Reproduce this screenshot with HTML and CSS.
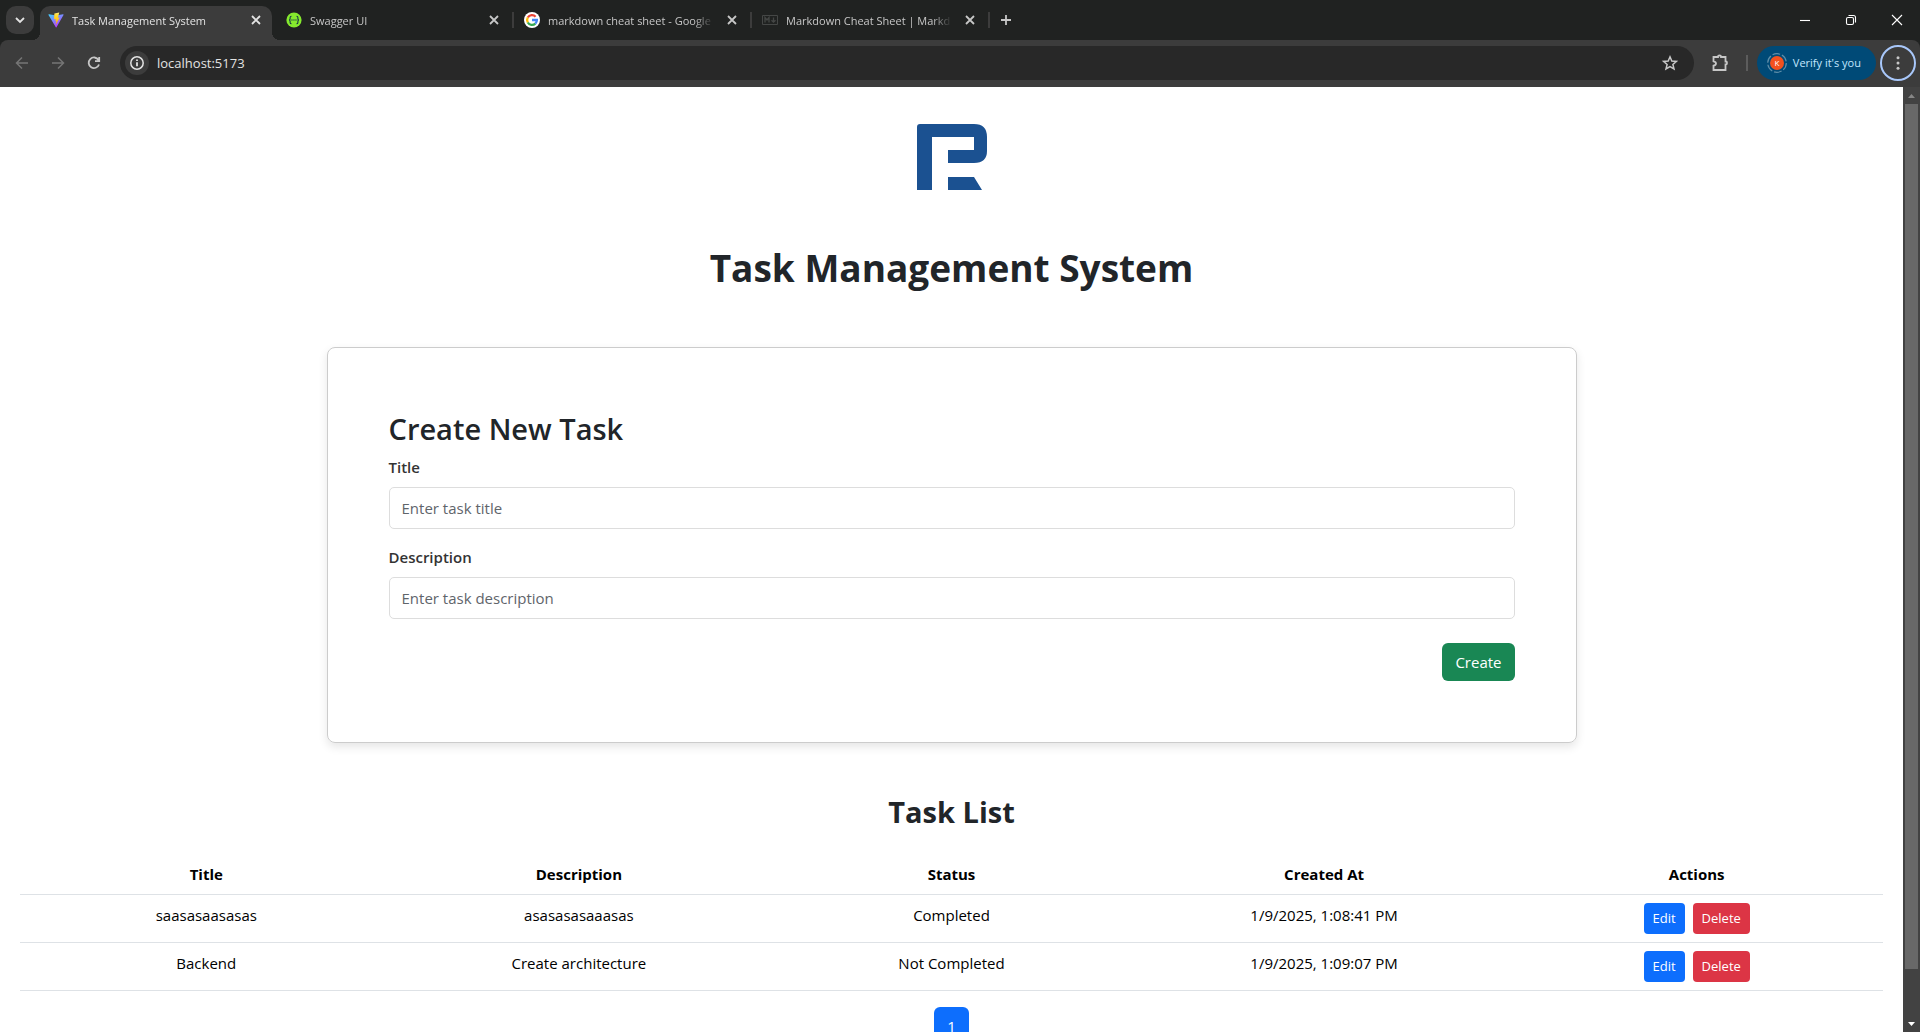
FILE: index.html
```html
<!DOCTYPE html>
<html lang="en">
<head>
<meta charset="utf-8">
<meta name="viewport" content="width=device-width, initial-scale=1">
<title>Task Management System</title>
<link rel="stylesheet" href="styles.css">
</head>
<body>
<div class="browser">
  <header class="chrome">
    <div class="tabstrip">
      <button class="tab-search" aria-label="Search tabs"><svg width="12" height="12" viewBox="0 0 12 12"><path d="M2 4l4 4 4-4" class="line-bold"/></svg></button>
      <div class="tabs">
        <div class="tab tab-active">
          <svg class="favicon" viewBox="0 0 32 32"><defs><linearGradient id="vite" x1="0" y1="0" x2="0.6" y2="1"><stop offset="0" stop-color="#41d1ff"/><stop offset="1" stop-color="#bd34fe"/></linearGradient><linearGradient id="bolt" x1="0" y1="0" x2="0" y2="1"><stop offset="0" stop-color="#ffea83"/><stop offset="0.2" stop-color="#ffdd35"/><stop offset="1" stop-color="#ffa800"/></linearGradient></defs><path d="M31 6L17 30.500q-.7 1-1.400 0L1 6q-.5-1.500 1-1.300l14 2.500 14-2.500q1.500-.2 1 1.300z" fill="url(#vite)"/><path d="M22.500 1L12.800 3l-.7 11q0 .5.500.5l3-.7-.8 4.500 1.800-.5-1.200 7q0 .8.500.3L23.500 11l-3.600.6z" fill="url(#bolt)"/></svg>
          <span class="tab-title">Task Management System</span>
          <button class="tab-close" aria-label="Close tab"><svg width="10" height="10" viewBox="0 0 10 10"><path d="M1 1l8 8M9 1l-8 8" class="line-bold"/></svg></button>
        </div>
        <div class="tab">
          <svg class="favicon" viewBox="0 0 16 16"><circle cx="8" cy="8" r="7.600" fill="#85ea2d"/><path d="M5.500 4.200q-1.400 0-1.400 1.300v1.200Q4.100 8 3 8q1.100 0 1.100 1.300v1.200q0 1.300 1.400 1.300M10.500 4.200q1.400 0 1.400 1.300v1.200Q11.900 8 13 8q-1.100 0-1.100 1.300v1.200q0 1.300-1.400 1.300" fill="none" stroke="#173647" stroke-width="1.100"/><path d="M5.300 8h5.400" stroke="#173647" stroke-width="1.200" stroke-dasharray="1.300 .7"/></svg>
          <span class="tab-title">Swagger UI</span>
          <button class="tab-close" aria-label="Close tab"><svg width="10" height="10" viewBox="0 0 10 10"><path d="M1 1l8 8M9 1l-8 8" class="line-bold"/></svg></button>
        </div>
        <div class="tab tab-divided">
          <svg class="favicon" viewBox="0 0 16 16"><circle cx="8" cy="8" r="8" fill="#fff"/><g fill="none" stroke-width="2.300"><path d="M11.600 4.700A4.900 4.900 0 0 0 3.800 5.500" stroke="#ea4335"/><path d="M3.800 5.500a4.900 4.900 0 0 0 0 5" stroke="#fbbc05"/><path d="M3.800 10.500a4.900 4.900 0 0 0 7.500 1.100" stroke="#34a853"/><path d="M11.300 11.600A4.900 4.900 0 0 0 12.900 8H8" stroke="#4285f4"/></g></svg>
          <span class="tab-title">markdown cheat sheet - Google</span>
          <button class="tab-close" aria-label="Close tab"><svg width="10" height="10" viewBox="0 0 10 10"><path d="M1 1l8 8M9 1l-8 8" class="line-bold"/></svg></button>
        </div>
        <div class="tab tab-divided tab-last">
          <svg class="favicon" viewBox="0 0 16 16" fill="none" stroke="#454746"><path d="M.5 3.500h15v9H.5z"/><path d="M3 10.500v-5l2 2.500 2-2.500v5M11.500 5.500v4.500M9.500 8.200l2 2 2-2" stroke-width="1.300"/></svg>
          <span class="tab-title">Markdown Cheat Sheet | Markd</span>
          <button class="tab-close" aria-label="Close tab"><svg width="10" height="10" viewBox="0 0 10 10"><path d="M1 1l8 8M9 1l-8 8" class="line-bold"/></svg></button>
        </div>
      </div>
      <button class="new-tab" aria-label="New tab"><svg width="12" height="12" viewBox="0 0 12 12"><path d="M6 1v10M1 6h10" class="line-bold"/></svg></button>
      <div class="window-controls">
        <button aria-label="Minimize"><svg width="12" height="12" viewBox="0 0 12 12"><path d="M1 6.500h10" class="line-thin"/></svg></button>
        <button aria-label="Restore"><svg width="12" height="12" viewBox="0 0 12 12"><rect x="1.500" y="3.500" width="7" height="7" rx="1.500" class="line-thin"/><path d="M3.500 1.500h5a2 2 0 0 1 2 2v5" class="line-thin"/></svg></button>
        <button aria-label="Close"><svg width="12" height="12" viewBox="0 0 12 12"><path d="M1 1l10 10M11 1L1 11" class="line-thin"/></svg></button>
      </div>
    </div>
    <div class="toolbar">
      <div class="nav">
        <button class="nav-off" aria-label="Back"><svg width="16" height="16" viewBox="0 0 16 16"><path d="M14 8H3M8 2.500L2.500 8 8 13.500" class="line"/></svg></button>
        <button class="nav-off" aria-label="Forward"><svg width="16" height="16" viewBox="0 0 16 16"><path d="M2 8h11M8 2.500L13.500 8 8 13.500" class="line"/></svg></button>
        <button aria-label="Reload"><svg width="16" height="16" viewBox="0 0 16 16"><path d="M13 9.500A5.300 5.300 0 1 1 12.500 5M13.200 2v4.200H9" class="line-bold"/></svg></button>
      </div>
      <div class="omnibox">
        <button class="site-info" aria-label="View site information"><svg width="16" height="16" viewBox="0 0 16 16"><circle cx="8" cy="8" r="6.200" class="line"/><path d="M8 7.200v4M8 4.500v1.600" class="line-bold"/></svg></button>
        <input class="url" type="text" aria-label="Address" value="localhost:5173">
        <button class="star" aria-label="Bookmark this tab"><svg width="18" height="18" viewBox="0 0 18 18"><path d="M9 2.800l1.800 4.200 4.600.4-3.500 3 1.100 4.500L9 12.500l-4 2.400 1.100-4.500-3.500-3 4.600-.4z" class="line"/></svg></button>
      </div>
      <button class="extensions" aria-label="Extensions"><svg width="18" height="18" viewBox="0 0 18 18"><path d="M2.500 3h4.500v-.5a1.500 1 0 0 1 3 0V3h4.500v4.500h.5a1 1.500 0 0 1 0 3h-.5v5.500h-12v-4.300q2.500-.5 2.500-2.200t-2.500-2.200z" class="line-bold"/></svg></button>
      <span class="toolbar-divider"></span>
      <button class="profile"><svg width="20" height="20" viewBox="0 0 20 20"><circle cx="10" cy="10" r="9.300" fill="none" stroke="#5f8ea8" stroke-width="1.200" stroke-dasharray="7.740 2"/><circle cx="10" cy="10" r="7" fill="#f4511e"/><text x="10" y="13" text-anchor="middle" class="initial">K</text></svg><span>Verify it's you</span></button>
      <button class="menu" aria-label="Menu"><svg width="16" height="16" viewBox="0 0 16 16" fill="#c7c7c7"><circle cx="8" cy="2.700" r="1.500"/><circle cx="8" cy="8" r="1.500"/><circle cx="8" cy="13.300" r="1.500"/></svg></button>
    </div>
  </header>
  <div class="viewport">
    <main class="page">
      <svg class="logo" viewBox="0 0 70 66" role="img" aria-label="Logo"><path d="M3 0h54q13 0 13 13v14q0 12-13 12H31V26h26V13H15v53H0V3q0-3 3-3zM31 53h26l8 13H31z" fill="#1b5191"/></svg>
      <h1>Task Management System</h1>
      <form class="card">
        <h2>Create New Task</h2>
        <div class="field">
          <label for="title">Title</label>
          <input id="title" type="text" placeholder="Enter task title">
        </div>
        <div class="field">
          <label for="description">Description</label>
          <input id="description" type="text" placeholder="Enter task description">
        </div>
        <div class="form-actions"><button type="button" class="btn btn-success">Create</button></div>
      </form>
      <section class="tasks">
        <h2>Task List</h2>
        <table>
          <thead><tr><th>Title</th><th>Description</th><th>Status</th><th>Created At</th><th>Actions</th></tr></thead>
          <tbody>
            <tr><td>saasasaasasas</td><td>asasasasaaasas</td><td>Completed</td><td>1/9/2025, 1:08:41 PM</td><td><div class="row-actions"><button class="btn btn-small btn-primary">Edit</button><button class="btn btn-small btn-danger">Delete</button></div></td></tr>
            <tr><td>Backend</td><td>Create architecture</td><td>Not Completed</td><td>1/9/2025, 1:09:07 PM</td><td><div class="row-actions"><button class="btn btn-small btn-primary">Edit</button><button class="btn btn-small btn-danger">Delete</button></div></td></tr>
          </tbody>
        </table>
        <nav class="pagination"><button class="btn btn-primary">1</button></nav>
      </section>
    </main>
    <div class="scrollbar" aria-hidden="true">
      <svg width="17" height="17" viewBox="0 0 17 17"><path d="M5 11l3.500-4 3.500 4z" fill="#868686"/></svg>
      <div class="track"><div class="thumb"></div></div>
      <svg width="17" height="17" viewBox="0 0 17 17"><path d="M5 7l3.500 4L12 7z" fill="#fff"/></svg>
    </div>
  </div>
</div>
</body>
</html>
```
FILE: styles.css
```css
* { box-sizing: border-box; }
body {
  margin: 0;
  font-family: "Open Sans", "Noto Sans", sans-serif;
  font-size: 15px;
  line-height: 24px;
  color: #212529;
  background: #fff;
}
button, input { font: inherit; color: inherit; margin: 0; }
button { border: 0; padding: 0; background: none; }
svg { display: block; flex: none; }
h1, h2 { margin: 0; }

.browser { display: flex; flex-direction: column; height: 100vh; overflow: hidden; }

.line, .line-bold, .line-thin { fill: none; stroke: currentColor; }
.line { stroke-width: 1.500; }
.line-bold { stroke-width: 1.800; }
.line-thin { stroke-width: 1.100; }

/* Browser frame */
.chrome { flex: none; background: #202221; color: #c7c7c7; font-size: 11px; line-height: 16px; }
.tabstrip { display: flex; height: 40px; padding: 6px 0 0 6px; }
.tab-search {
  display: grid; place-items: center;
  width: 28px; height: 28px; border-radius: 10px;
  background: #3c3c3c; color: #e3e3e3;
}
.tabs { display: flex; margin-left: 6px; }
.tab {
  position: relative;
  display: flex; align-items: center; gap: 8px;
  width: 238px; padding: 0 16px 6px 8px;
}
.tab-active { background: #3c3c3c; color: #e3e3e3; width: 232px; border-radius: 10px 10px 0 0; padding-right: 10px; margin-right: 6px; }
.tab-active::before, .tab-active::after {
  content: ""; position: absolute; bottom: 0; width: 8px; height: 8px;
}
.tab-active::before { right: 100%; background: radial-gradient(circle at 0 0, #202221 8px, #3c3c3c 8px); }
.tab-active::after { left: 100%; background: radial-gradient(circle at 100% 0, #202221 8px, #3c3c3c 8px); }
.tab-divided::before, .tab-last::after {
  content: ""; position: absolute; top: 6px; width: 2px; height: 16px; background: #3c3c3c;
}
.tab-divided::before { left: -12px; }
.tab-last::after { right: 10px; }
.tab-divided::before { left: -4px; }
.tab-last::after { right: 2px; }
.favicon { width: 16px; height: 16px; }
.tab-title {
  flex: 1; min-width: 0; overflow: hidden; white-space: nowrap; padding-top: 1px;
  -webkit-mask-image: linear-gradient(to left, transparent 4px, #000 24px);
  mask-image: linear-gradient(to left, transparent 4px, #000 24px);
}
.tab-close { display: grid; place-items: center; width: 12px; height: 16px; }
.new-tab { display: grid; place-items: center; width: 28px; height: 28px; }
.window-controls { display: flex; margin-left: auto; color: #fff; }
.window-controls button { display: grid; place-items: center; width: 46px; height: 28px; }

.toolbar {
  display: flex; align-items: center; height: 47px; padding: 0 4px 1px;
  background: #3c3c3c; border-radius: 8px 8px 0 0;
}
.nav { display: flex; color: #c7c7c7; }
.nav button { display: grid; place-items: center; width: 36px; height: 34px; }
.nav .nav-off { color: #757575; }
.omnibox {
  flex: 1; display: flex; align-items: center;
  height: 34px; margin-left: 8px; padding: 0 15px 0 5px;
  border-radius: 17px; background: #282828;
}
.site-info { display: grid; place-items: center; width: 24px; height: 24px; border-radius: 12px; background: #3c3c3c; color: #e3e3e3; }
.star { color: #c7c7c7; }
.url { flex: 1; min-width: 0; margin-left: 8px; padding: 0; border: 0; outline: 0; background: none; color: #e3e3e3; font-size: 13px; }
.extensions { margin: 0 17px; }
.toolbar-divider { width: 2px; height: 16px; background: #5c5c5c; }
.profile {
  display: flex; align-items: center; gap: 6px;
  height: 34px; margin: 0 4px 0 9px; padding: 0 15px 0 10px;
  border-radius: 17px; background: #004a77; color: #c2e7ff;
}
.initial { font-size: 8px; fill: #fff; }
.menu { display: grid; place-items: center; width: 36px; height: 36px; border: 2px solid #a8c7fa; border-radius: 18px; }

/* Page area */
.viewport { flex: 1; min-height: 0; display: flex; }
.page {
  flex: 1; min-width: 0; overflow: hidden;
  display: flex; flex-direction: column; align-items: center;
  padding: 37px 20px 0;
}
.page > * { flex: none; }
.logo { width: 70px; height: 66px; }
h1 { margin-top: 54px; font-size: 37px; line-height: 48px; font-weight: 700; }
.card {
  width: 100%; max-width: 1250px; margin-top: 55px; padding: 61px;
  border: 1px solid #ccc; border-radius: 8px;
  box-shadow: 0 4px 10px rgba(0, 0, 0, 0.1);
}
.card h2 { font-size: 29px; line-height: 40px; font-weight: 600; margin-bottom: 6px; }
.field { display: flex; flex-direction: column; gap: 8px; margin-bottom: 16px; }
.field label { font-weight: 600; color: #333; }
.field input {
  height: 42px; padding: 0 12px;
  border: 1px solid #ddd; border-radius: 5px; background: #fff;
}
.field input::placeholder { color: #5f656b; opacity: 1; }
.form-actions { display: flex; justify-content: flex-end; margin-top: 24px; }

.btn { padding: 7px 13px; border-radius: 6px; color: #fff; line-height: 24px; }
.btn-small { padding: 5px 9px; border-radius: 4px; font-size: 13px; line-height: 21px; }
.btn-success { background: #198754; }
.btn-primary { background: #0d6efd; }
.btn-danger { background: #dc3545; }

.tasks { width: 100%; margin-top: 50px; text-align: center; }
.tasks h2 { font-size: 29px; line-height: 38px; font-weight: 700; margin-bottom: 23px; }
table { width: 100%; table-layout: fixed; border-collapse: collapse; color: #000; }
th, td { padding: 8px; border-bottom: 1px solid #dee2e6; vertical-align: top; }
th { font-weight: 700; }
.row-actions { display: flex; justify-content: center; gap: 8px; }
.pagination { display: flex; justify-content: center; padding-top: 16px; }

.scrollbar { flex: none; display: flex; flex-direction: column; width: 17px; background: #424242; }
.track { flex: 1; padding: 0 2px; }
.thumb { height: 95%; background: #686868; }
```
